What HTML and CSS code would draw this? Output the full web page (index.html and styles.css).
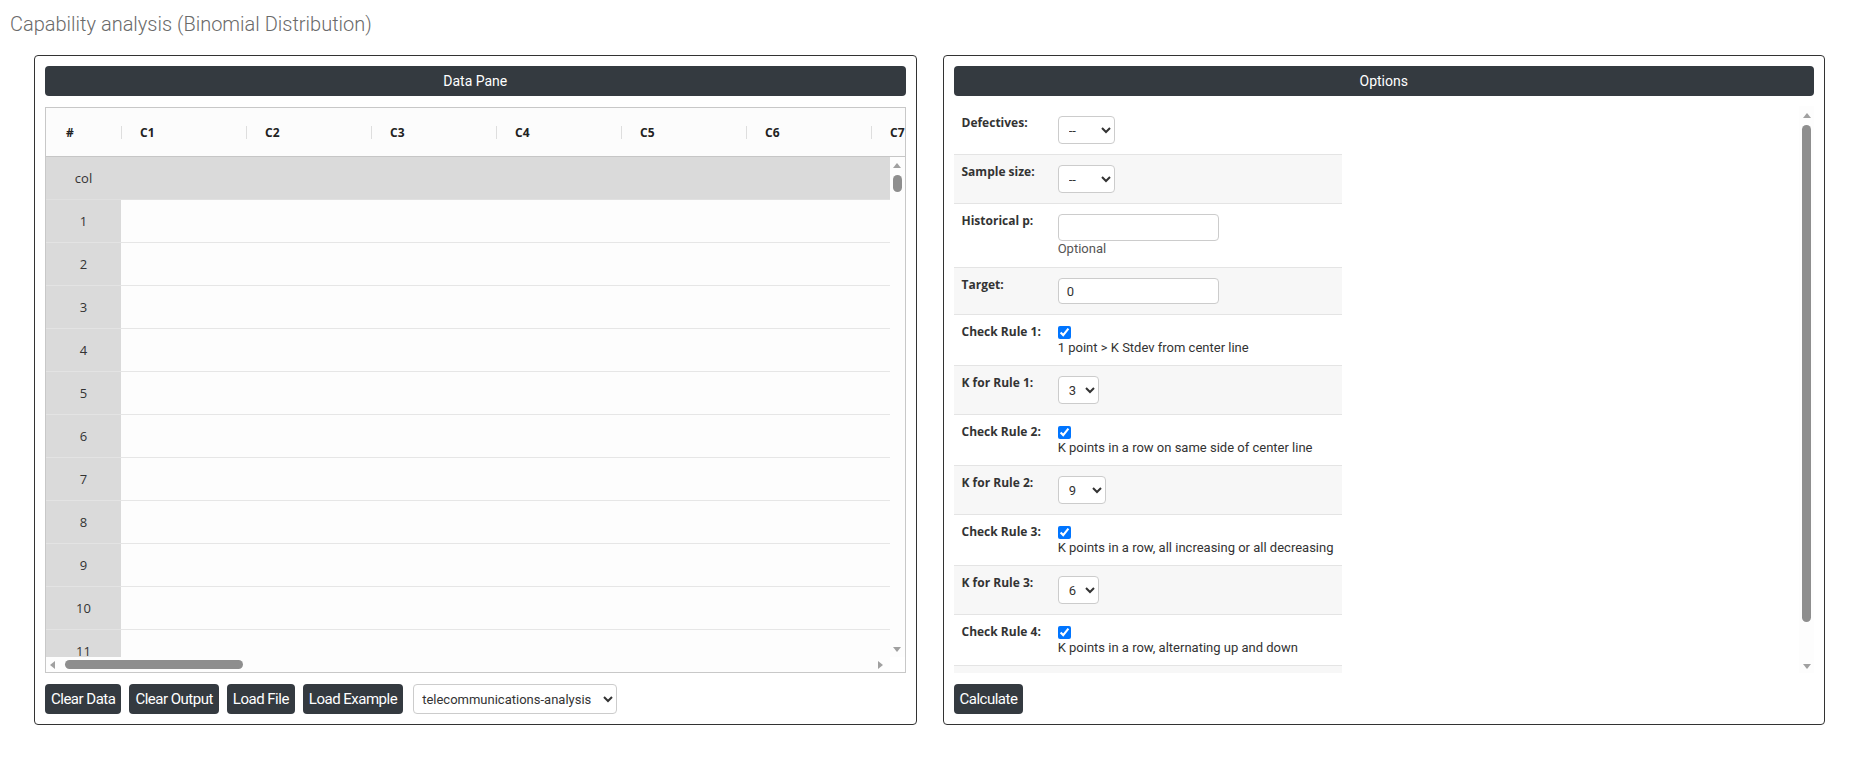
FILE: index.html
```html
<!DOCTYPE html>
<html lang="en">
<head>
  <meta charset="UTF-8">
  <meta name="viewport" content="width=device-width, initial-scale=1.0">
  <title>Capability analysis (Binomial Distribution)</title>
  <link rel="stylesheet" href="styles.css">
</head>
<body>
  <h4 class="page-title">Capability analysis (Binomial Distribution)</h4>

  <div class="panes">
    <!-- data entry grid -->
    <div class="pane">
      <div class="pane-head">Data Pane</div>
      <div class="sheet">
        <div class="sheet-head">
          <div class="hcell idx">#</div>
          <div class="hcell">C1</div>
          <div class="hcell">C2</div>
          <div class="hcell">C3</div>
          <div class="hcell">C4</div>
          <div class="hcell">C5</div>
          <div class="hcell">C6</div>
          <div class="hcell">C7</div>
        </div>
        <div class="sheet-body">
          <div class="sheet-rows">
            <div class="srow name-row"><div class="rnum">col</div><div class="rcells"></div></div>
            <div class="srow"><div class="rnum">1</div><div class="rcells"></div></div>
            <div class="srow"><div class="rnum">2</div><div class="rcells"></div></div>
            <div class="srow"><div class="rnum">3</div><div class="rcells"></div></div>
            <div class="srow"><div class="rnum">4</div><div class="rcells"></div></div>
            <div class="srow"><div class="rnum">5</div><div class="rcells"></div></div>
            <div class="srow"><div class="rnum">6</div><div class="rcells"></div></div>
            <div class="srow"><div class="rnum">7</div><div class="rcells"></div></div>
            <div class="srow"><div class="rnum">8</div><div class="rcells"></div></div>
            <div class="srow"><div class="rnum">9</div><div class="rcells"></div></div>
            <div class="srow"><div class="rnum">10</div><div class="rcells"></div></div>
            <div class="srow"><div class="rnum">11</div><div class="rcells"></div></div>
          </div>
          <div class="vbar sheet-vbar">
            <span class="arr up"></span>
            <span class="thumb"></span>
            <span class="fill"></span>
            <span class="arr down"></span>
          </div>
        </div>
        <div class="hbar">
          <span class="arr left"></span>
          <span class="thumb"></span>
          <span class="fill"></span>
          <span class="arr right"></span>
        </div>
      </div>
      <div class="toolbar">
        <button class="btn">Clear Data</button>
        <button class="btn">Clear Output</button>
        <button class="btn">Load File</button>
        <button class="btn">Load Example</button>
        <select class="picker">
          <option>telecommunications-analysis</option>
        </select>
      </div>
    </div>

    <!-- analysis options -->
    <div class="pane">
      <div class="pane-head">Options</div>
      <div class="opts-wrap">
        <div class="opts-scroll">
          <table class="opts">
            <tr>
              <td class="lbl">Defectives:</td>
              <td class="val"><select class="sel w57"><option>--</option></select></td>
            </tr>
            <tr>
              <td class="lbl">Sample size:</td>
              <td class="val"><select class="sel w57"><option>--</option></select></td>
            </tr>
            <tr>
              <td class="lbl">Historical p:</td>
              <td class="val"><input class="txt" type="text"><div class="hint">Optional</div></td>
            </tr>
            <tr>
              <td class="lbl">Target:</td>
              <td class="val"><input class="txt short" type="text" value="0"></td>
            </tr>
            <tr>
              <td class="lbl">Check Rule 1:</td>
              <td class="val"><div class="chk"><input type="checkbox" checked></div><div class="desc">1 point &gt; K Stdev from center line</div></td>
            </tr>
            <tr>
              <td class="lbl">K for Rule 1:</td>
              <td class="val"><select class="sel w41"><option>3</option></select></td>
            </tr>
            <tr>
              <td class="lbl">Check Rule 2:</td>
              <td class="val"><div class="chk"><input type="checkbox" checked></div><div class="desc">K points in a row on same side of center line</div></td>
            </tr>
            <tr>
              <td class="lbl">K for Rule 2:</td>
              <td class="val"><select class="sel w48"><option>9</option></select></td>
            </tr>
            <tr>
              <td class="lbl">Check Rule 3:</td>
              <td class="val"><div class="chk"><input type="checkbox" checked></div><div class="desc">K points in a row, all increasing or all decreasing</div></td>
            </tr>
            <tr>
              <td class="lbl">K for Rule 3:</td>
              <td class="val"><select class="sel w41"><option>6</option></select></td>
            </tr>
            <tr>
              <td class="lbl">Check Rule 4:</td>
              <td class="val"><div class="chk"><input type="checkbox" checked></div><div class="desc">K points in a row, alternating up and down</div></td>
            </tr>
            <tr>
              <td class="lbl">K for Rule 4:</td>
              <td class="val"><select class="sel w48"><option>14</option></select></td>
            </tr>
          </table>
        </div>
        <div class="vbar opts-vbar">
          <span class="arr up"></span>
          <span class="thumb"></span>
          <span class="fill"></span>
          <span class="arr down"></span>
        </div>
      </div>
      <div class="toolbar">
        <button class="btn">Calculate</button>
      </div>
    </div>
  </div>
</body>
</html>
```

FILE: styles.css
```css
body { margin: 0; font-family: Roboto, "Liberation Sans", sans-serif; color: #333; background: #fff; }

.page-title { margin: 12px 0 0 10px; font-size: 20px; line-height: 24px; font-weight: 300; color: #6a6a6a; }

.panes { display: grid; grid-template-columns: minmax(0, 1fr) minmax(0, 1fr); gap: 26px; margin: 19px 27px 0 34px; }
.pane { min-width: 0; border: 1px solid #333; border-radius: 4px; padding: 10px; display: flex; flex-direction: column; }
.pane-head { height: 30px; line-height: 30px; text-align: center; background: #343a40; color: #fff; font-size: 14px; border-radius: 4px; }

/* spreadsheet */
.sheet { margin-top: 11px; height: 564px; border: 1px solid #c8c8c8; display: flex; flex-direction: column; overflow: hidden; font-family: "Open Sans", "Noto Sans", sans-serif; }
.sheet-head { display: flex; height: 48px; flex: none; background: #fcfcfc; border-bottom: 1px solid #c6c6c6; overflow: hidden; }
.hcell { flex: 0 0 125px; position: relative; display: flex; align-items: center; padding-left: 19px; box-sizing: border-box; font-size: 12px; font-weight: 700; color: #222; }
.hcell.idx { flex-basis: 75px; padding-left: 20px; }
.hcell + .hcell::before { content: ""; position: absolute; left: 0; top: 18px; width: 1px; height: 13px; background: #dedede; }
.sheet-body { display: flex; height: 500px; flex: none; }
.sheet-rows { flex: 1; min-width: 0; overflow: hidden; }
.srow { display: flex; height: 43px; }
.rnum { flex: 0 0 75px; display: flex; align-items: center; justify-content: center; background: #dadada; border-bottom: 1px solid #e3e3e3; box-sizing: border-box; font-size: 13px; color: #333; }
.rcells { flex: 1; background: #fdfdfd; border-bottom: 1px solid #e6e6e6; }
.name-row .rnum, .name-row .rcells { background: #dadada; border-bottom-color: #e0e0e0; }

/* scrollbars */
.vbar { flex: 0 0 15px; display: flex; flex-direction: column; align-items: center; background: #fdfdfd; }
.hbar { display: flex; align-items: center; height: 15px; flex: none; margin-right: 15px; background: #fdfdfd; }
.thumb { background: #8e8e8e; border-radius: 5px; }
.fill { flex: 1; }
.arr { width: 0; height: 0; border: 4px solid transparent; }
.arr.up { border-top: 0; border-bottom: 5px solid #a0a0a0; }
.arr.down { border-bottom: 0; border-top: 5px solid #a0a0a0; }
.arr.left { border-left: 0; border-right: 5px solid #a0a0a0; }
.arr.right { border-right: 0; border-left: 5px solid #a0a0a0; }
.vbar .thumb { width: 9px; }
.sheet-vbar .arr.up { margin-top: 6px; }
.sheet-vbar .thumb { margin-top: 7px; height: 17px; }
.sheet-vbar .arr.down { margin-bottom: 5px; }
.hbar .arr.left { margin-left: 4px; }
.hbar .thumb { margin-left: 10px; width: 178px; height: 9px; }
.hbar .arr.right { margin-right: 7px; }

/* bottom buttons */
.toolbar { display: flex; align-items: center; gap: 8px; margin-top: 11px; }
.btn { height: 30px; padding: 0 6px; border: none; border-radius: 4px; background: #343a40; color: #fff; font-family: Roboto, sans-serif; font-size: 15px; letter-spacing: -0.5px; cursor: pointer; }
.picker { margin-left: 2px; width: 204px; height: 30px; padding: 0 4px; border: 1px solid #ccc; border-radius: 4px; background: #fff; font-family: Roboto, sans-serif; font-size: 13px; color: #333; }

/* options table */
.opts-wrap { display: flex; margin-top: 10px; height: 567px; }
.opts-scroll { flex: 1; min-width: 0; overflow: hidden; }
.opts { width: 388px; border-collapse: collapse; }
.opts tr { border-bottom: 1px solid #e4e4e4; }
.opts tr:nth-child(even) { background: #f7f7f7; }
.opts td { vertical-align: top; padding: 10px 8px 10px 8px; }
.opts .lbl { width: 88px; font-family: "Open Sans", "Noto Sans", sans-serif; font-size: 12px; line-height: 14px; font-weight: 700; color: #333; }
.opts .val { font-size: 13px; white-space: nowrap; }
.sel { height: 28px; padding: 0 6px; border: 1px solid #ccc; border-radius: 4px; background: #fff; font-family: Roboto, sans-serif; font-size: 13px; color: #333; display: block; }
.w57 { width: 57px; }
.w41 { width: 41px; }
.w48 { width: 48px; }
.txt { display: block; box-sizing: border-box; width: 161px; height: 27px; padding: 0 8px; border: 1px solid #ccc; border-radius: 4px; font-family: Roboto, sans-serif; font-size: 13px; color: #333; }
.txt.short { height: 26px; }
.hint { line-height: 16px; color: #555; }
.chk { height: 15px; }
.chk input { margin: 1px 0 0 0; width: 13px; height: 13px; display: block; }
.desc { line-height: 14px; color: #333; }
.opts-vbar .arr.up { margin-top: 7px; }
.opts-vbar .thumb { margin-top: 7px; height: 497px; }
.opts-vbar .arr.down { margin-bottom: 4px; }
```
